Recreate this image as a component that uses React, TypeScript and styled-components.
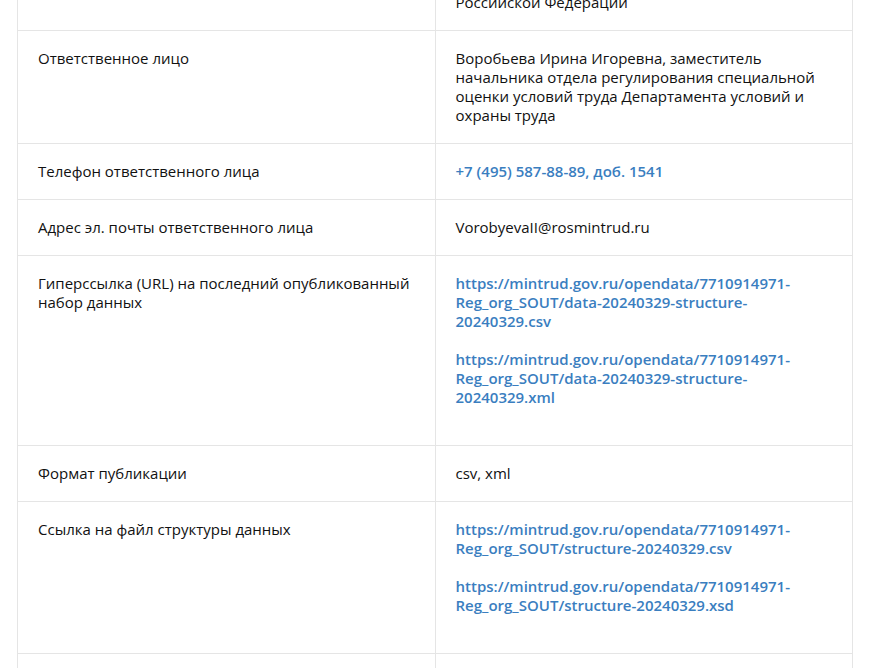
import React from "react";
import styled, { createGlobalStyle } from "styled-components";

const Global = createGlobalStyle`
  html, body { margin: 0; padding: 0; background: #ffffff; }
  body { font-family: "Open Sans", "Noto Sans", Arial, sans-serif; color: #1a1a1a; overflow: hidden; }
`;

const Page = styled.div`
  padding: 0 32px 0 17px;
  margin-top: -45.5px;
`;

const Table = styled.table`
  width: 836px;
  border-collapse: collapse;
  table-layout: fixed;
`;

const Cell = styled.td`
  width: 50%;
  border: 1px solid #e5e5e5;
  padding: 18px 20px;
  vertical-align: top;
  font-size: 15px;
  line-height: 19px;
  color: #111111;
`;

const Link = styled.a`
  color: #3a7ebf;
  font-weight: 600;
  text-decoration: none;
`;

const LinkPara = styled.p`
  margin: 0 0 19.5px 0;
`;

type Row = { label: string; value: React.ReactNode };

const linkList = (urls: string[]) => (
  <>
    {urls.map((u) => (
      <LinkPara key={u}>
        <Link href={u}>{u}</Link>
      </LinkPara>
    ))}
  </>
);

const rows: Row[] = [
  {
    label: "Владелец набора данных",
    value: "Министерство труда и социальной защиты Российской Федерации",
  },
  {
    label: "Ответственное лицо",
    value:
      "Воробьева Ирина Игоревна, заместитель начальника отдела регулирования специальной оценки условий труда Департамента условий и охраны труда",
  },
  {
    label: "Телефон ответственного лица",
    value: <Link href="tel:+74955878889">+7 (495) 587-88-89, доб. 1541</Link>,
  },
  {
    label: "Адрес эл. почты ответственного лица",
    value: "VorobyevaII@rosmintrud.ru",
  },
  {
    label: "Гиперссылка (URL) на последний опубликованный набор данных",
    value: linkList([
      "https://mintrud.gov.ru/opendata/7710914971-Reg_org_SOUT/data-20240329-structure-20240329.csv",
      "https://mintrud.gov.ru/opendata/7710914971-Reg_org_SOUT/data-20240329-structure-20240329.xml",
    ]),
  },
  { label: "Формат публикации", value: "csv, xml" },
  {
    label: "Ссылка на файл структуры данных",
    value: linkList([
      "https://mintrud.gov.ru/opendata/7710914971-Reg_org_SOUT/structure-20240329.csv",
      "https://mintrud.gov.ru/opendata/7710914971-Reg_org_SOUT/structure-20240329.xsd",
    ]),
  },
  { label: "Дата первой публикации набора данных", value: "29.03.2024" },
];

export default function App() {
  return (
    <>
      <Global />
      <Page>
        <Table>
          <tbody>
            {rows.map((r) => (
              <tr key={r.label}>
                <Cell>{r.label}</Cell>
                <Cell>{r.value}</Cell>
              </tr>
            ))}
          </tbody>
        </Table>
      </Page>
    </>
  );
}
